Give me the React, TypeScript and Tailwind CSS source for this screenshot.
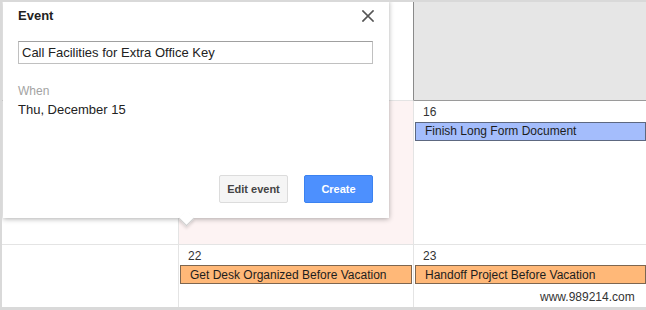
import React from 'react';

function CloseIcon() {
  return (
    <svg width="12" height="12" viewBox="0 0 12 12" className="block">
      <path d="M1 1L11 11M11 1L1 11" stroke="#555" strokeWidth="1.7" strokeLinecap="square" />
    </svg>
  );
}

function EventBar({ title, tone }: { title: string; tone: 'blue' | 'orange' }) {
  const cls =
    tone === 'blue'
      ? 'bg-[#a4bdfc] border-[#5d6880] pt-[1px] pb-[2px]'
      : 'bg-[#ffb878] border-[#7d6650] pt-[2px] pb-[1px]';
  return (
    <div className={`border pl-[9px] text-[12px] leading-[14px] text-[#1d1d1d] whitespace-nowrap overflow-hidden ${cls}`}>
      {title}
    </div>
  );
}

function EventPopup() {
  return (
    <div className="absolute left-[3px] top-0 w-[386px] h-[218px] bg-white shadow-[0_1px_5px_rgba(0,0,0,0.32)] z-10 pl-[15px] pr-[16px] pt-[8px]">
      {/* tail */}
      <div className="absolute left-[178px] bottom-[-6px] w-[11px] h-[11px] bg-white rotate-45 border-r border-b border-[#cfcfcf] shadow-[2px_2px_3px_rgba(0,0,0,0.12)]" />

      <div className="relative flex items-center justify-between h-[16px]">
        <span className="text-[13px] leading-[16px] font-bold text-[#222]">Event</span>
        <span className="mr-[-1px]">
          <CloseIcon />
        </span>
      </div>

      <input
        readOnly
        defaultValue="Call Facilities for Extra Office Key"
        className="mt-[17px] block w-[355px] h-[23px] border border-[#c0c0c0] border-t-[#a0a0a0] px-[3px] text-[13px] text-[#222] outline-none"
        style={{ fontFamily: '"Liberation Sans", Arial, sans-serif' }}
      />

      <div className="mt-[19px] text-[12px] leading-[16px] text-[#a3a3a3]">When</div>
      <div className="mt-[3px] text-[13px] leading-[16px] text-[#222]">Thu, December 15</div>

      <div className="relative mt-[57px] flex justify-end gap-[16px]">
        <button className="w-[69px] h-[28px] rounded-[2px] border border-[#dcdcdc] bg-[#f5f5f5] text-[11px] font-bold text-[#444]">
          Edit event
        </button>
        <button className="w-[69px] h-[28px] rounded-[2px] border border-[#3b82f0] bg-[#4d90fe] text-[11px] font-bold text-white">
          Create
        </button>
      </div>
    </div>
  );
}

export default function App() {
  return (
    <div
      className="relative w-[646px] h-[310px] overflow-hidden bg-white text-[#333]"
      style={{ fontFamily: '"Liberation Sans", Arial, sans-serif' }}
    >
      <div className="grid grid-cols-[179px_235px_1fr] grid-rows-[101px_144px_1fr] h-full">
        {/* row 1 */}
        <div className="border-r border-b border-[#e4e4e4]" />
        <div className="border-b border-[#e4e4e4] border-r border-r-[#8a8a8a]" />
        <div className="bg-[#e6e6e6] border-b border-[#9a9a9a]" />

        {/* row 2 */}
        <div className="border-r border-b border-[#e4e4e4]" />
        <div className="bg-[#fdf3f3] border-r border-b border-[#e4e4e4]" />
        <div className="border-b border-[#e4e4e4] pt-[4px]">
          <div className="pl-[9px] text-[12px] leading-[14px] text-[#333]">16</div>
          <div className="mt-[3px] ml-[1px]">
            <EventBar title="Finish Long Form Document" tone="blue" />
          </div>
        </div>

        {/* row 3 */}
        <div className="border-r border-[#e4e4e4]" />
        <div className="border-r border-[#e4e4e4] pt-[4px]">
          <div className="pl-[9px] text-[12px] leading-[14px] text-[#333]">22</div>
          <div className="mt-[2px] mx-[1px]">
            <EventBar title="Get Desk Organized Before Vacation" tone="orange" />
          </div>
        </div>
        <div className="pt-[4px]">
          <div className="pl-[9px] text-[12px] leading-[14px] text-[#333]">23</div>
          <div className="mt-[2px] ml-[1px]">
            <EventBar title="Handoff Project Before Vacation" tone="orange" />
          </div>
        </div>
      </div>

      <EventPopup />

      {/* watermark */}
      <div className="absolute left-[540px] top-[290px] text-[12px] leading-[14px] text-[#333] z-20">
        www.989214.com
      </div>

      {/* screenshot frame */}
      <div className="pointer-events-none absolute inset-0 z-30 border-t-2 border-l-2 border-b-[3px] border-[#d9d9d9]" />
    </div>
  );
}
